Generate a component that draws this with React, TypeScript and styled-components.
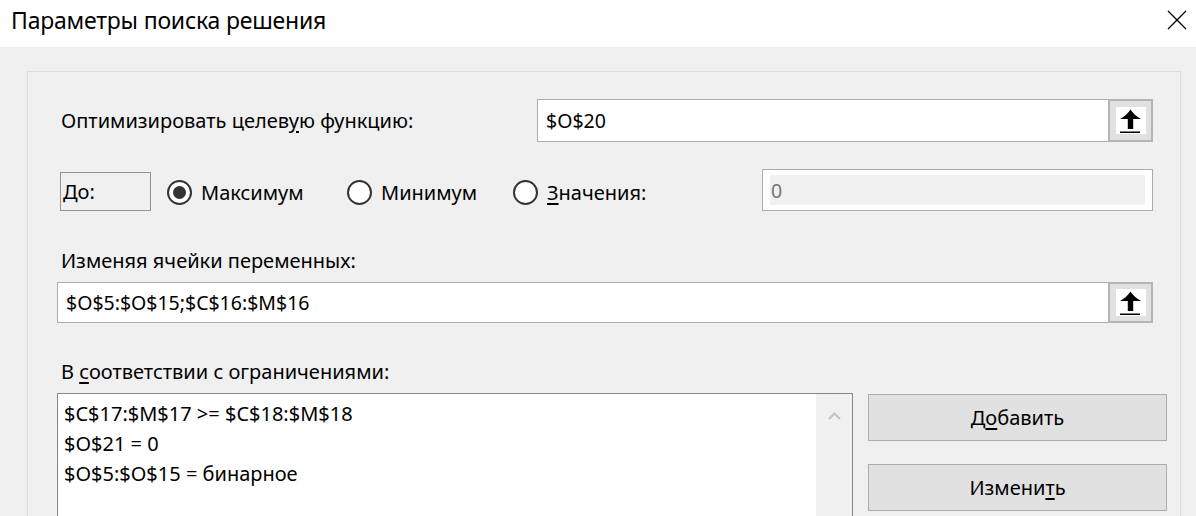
import React from 'react';
import styled, { createGlobalStyle } from 'styled-components';

const GlobalStyle = createGlobalStyle`
  html, body {
    margin: 0;
    padding: 0;
    background: #f0f0f0;
  }
  body {
    font-family: "Noto Sans", "Open Sans", sans-serif;
    color: #000;
    overflow: hidden;
  }
`;

const Window = styled.div`
  width: 1196px;
  height: 516px;
  overflow: hidden;
  display: flex;
  flex-direction: column;
  background: #f0f0f0;
`;

const TitleBar = styled.div`
  flex: none;
  height: 47px;
  background: #ffffff;
  display: flex;
  align-items: center;
  justify-content: space-between;
  padding: 0 8px 8px 11px;
  box-sizing: border-box;
`;

const Title = styled.div`
  font-size: 23px;
  letter-spacing: -0.2px;
`;

const CloseButton = styled.div`
  width: 22px;
  height: 22px;
  display: flex;
  align-items: center;
  justify-content: center;
`;

const Body = styled.div`
  flex: 1;
  min-height: 0;
  display: flex;
  padding: 24px 15px 0 27px;
`;

const Panel = styled.div`
  flex: 1;
  border: 1px solid #dcdcdc;
  border-bottom: none;
  padding: 27px 27px 0 29px;
  display: flex;
  flex-direction: column;
`;

const Row = styled.div<{ $height: number; $top?: number }>`
  display: flex;
  align-items: center;
  height: ${(p) => p.$height}px;
  margin-top: ${(p) => p.$top ?? 0}px;
  flex: none;
`;

const Label = styled.div<{ $top?: number }>`
  font-size: 20px;
  line-height: 28px;
  padding-left: 4px;
  margin-top: ${(p) => p.$top ?? 0}px;
  flex: none;
`;

const RowLabel = styled(Label)`
  flex: 1;
`;

const Mn = styled.span`
  text-decoration: underline;
  text-decoration-thickness: 2px;
  text-underline-offset: 3px;
`;

const RefGroup = styled.div<{ $width?: number; $height: number }>`
  display: flex;
  flex: none;
  height: ${(p) => p.$height}px;
  width: ${(p) => (p.$width ? `${p.$width}px` : 'auto')};
  margin-top: ${(p) => (p.$width ? 0 : 7)}px;
`;

const RefField = styled.div`
  flex: 1;
  background: #ffffff;
  border: 1px solid #adadad;
  border-right: none;
  display: flex;
  align-items: center;
  padding-left: 8px;
  font-size: 19.5px;
`;

const RefButton = styled.div`
  width: 45px;
  flex: none;
  box-sizing: border-box;
  border: 2px solid #b4b4b4;
  background: #e1e1e1;
  display: flex;
  align-items: center;
  justify-content: center;
`;

const RefIcon = styled.div`
  width: 30px;
  height: 27px;
  background: #ffffff;
  display: flex;
`;

const DoBox = styled.div`
  width: 91px;
  height: 39px;
  box-sizing: border-box;
  margin-left: 3px;
  align-self: flex-end;
  border: 1px solid #8d949e;
  font-size: 20px;
  padding: 5px 0 0 2px;
`;

const RadioOption = styled.div<{ $width?: number; $left?: number }>`
  display: flex;
  align-items: center;
  gap: 9px;
  width: ${(p) => (p.$width ? `${p.$width}px` : 'auto')};
  margin-left: ${(p) => p.$left ?? 0}px;
  flex: none;
  font-size: 20px;
  padding-top: 4px;
`;

const RadioCircle = styled.div<{ $checked?: boolean }>`
  width: 25px;
  height: 25px;
  box-sizing: border-box;
  border: 2px solid #333333;
  border-radius: 50%;
  background: #ffffff;
  display: flex;
  align-items: center;
  justify-content: center;
  &::after {
    content: '';
    display: ${(p) => (p.$checked ? 'block' : 'none')};
    width: 13px;
    height: 13px;
    border-radius: 50%;
    background: #333333;
  }
`;

const ValueBox = styled.div`
  flex: 1;
  height: 42px;
  box-sizing: border-box;
  border: 1px solid #adadad;
  background: #ffffff;
  padding: 5px 7px;
  display: flex;
`;

const ValueInner = styled.div`
  flex: 1;
  background: #f0f0f0;
  color: #767676;
  font-size: 19.5px;
  display: flex;
  align-items: center;
  padding-left: 1px;
`;

const ConstraintRow = styled.div`
  display: flex;
  margin-top: 7px;
  flex: none;
`;

const ListBox = styled.div`
  width: 796px;
  height: 150px;
  box-sizing: border-box;
  border: 1px solid #828790;
  border-bottom: none;
  display: flex;
  flex: none;
`;

const ListItems = styled.div`
  flex: 1;
  background: #ffffff;
  padding: 5px 6px;
  font-size: 20px;
  line-height: 30px;
`;

const ScrollTrack = styled.div`
  width: 36px;
  background: #f0f0f0;
  display: flex;
  justify-content: center;
  padding-top: 18px;
  box-sizing: border-box;
`;

const ButtonColumn = styled.div`
  display: flex;
  flex-direction: column;
  gap: 23px;
  margin-left: 15px;
  margin-right: -14px;
  margin-top: 1px;
  flex: 1;
`;

const DialogButton = styled.div`
  height: 47px;
  box-sizing: border-box;
  border: 1px solid #adadad;
  background: #e1e1e1;
  display: flex;
  align-items: center;
  justify-content: center;
  font-size: 20px;
`;

function ArrowIcon() {
  return (
    <svg width="30" height="27" viewBox="0 0 30 27">
      <path
        d="M14.5 2.5 Q18 8 25 12 L17.2 12 L17.2 22 L11.8 22 L11.8 12 L4 12 Q11 8 14.5 2.5 Z"
        fill="#000"
      />
      <rect x="4" y="24.5" width="20" height="1.5" fill="#000" />
    </svg>
  );
}

function RefInput({ value, width, height }: { value: string; width?: number; height: number }) {
  return (
    <RefGroup $width={width} $height={height}>
      <RefField>{value}</RefField>
      <RefButton>
        <RefIcon>
          <ArrowIcon />
        </RefIcon>
      </RefButton>
    </RefGroup>
  );
}

export default function App() {
  const constraints = [
    '$C$17:$M$17 >= $C$18:$M$18',
    '$O$21 = 0',
    '$O$5:$O$15 = бинарное',
  ];

  return (
    <Window>
      <GlobalStyle />
      <TitleBar>
        <Title>Параметры поиска решения</Title>
        <CloseButton>
          <svg width="20" height="20" viewBox="0 0 20 20">
            <path d="M1 1 L19 19 M19 1 L1 19" stroke="#000" strokeWidth="1.3" />
          </svg>
        </CloseButton>
      </TitleBar>
      <Body>
        <Panel>
          <Row $height={43}>
            <RowLabel>
              Оптимизировать целев<Mn>у</Mn>ю функцию:
            </RowLabel>
            <RefInput value="$O$20" width={616} height={43} />
          </Row>

          <Row $height={42} $top={27}>
            <DoBox>До:</DoBox>
            <RadioOption $left={16} $width={180}>
              <RadioCircle $checked />
              Максимум
            </RadioOption>
            <RadioOption $width={166}>
              <RadioCircle />
              Минимум
            </RadioOption>
            <RadioOption $width={249}>
              <RadioCircle />
              <span>
                <Mn>З</Mn>начения:
              </span>
            </RadioOption>
            <ValueBox>
              <ValueInner>0</ValueInner>
            </ValueBox>
          </Row>

          <Label $top={36}>Изменяя ячейки переменных:</Label>
          <RefInput value="$O$5:$O$15;$C$16:$M$16" height={41} />

          <Label $top={35}>
            В <Mn>с</Mn>оответствии с ограничениями:
          </Label>
          <ConstraintRow>
            <ListBox>
              <ListItems>
                {constraints.map((c) => (
                  <div key={c}>{c}</div>
                ))}
              </ListItems>
              <ScrollTrack>
                <svg width="13" height="8" viewBox="0 0 13 8">
                  <path d="M1 7 L6.5 1.5 L12 7" fill="none" stroke="#c2c2c2" strokeWidth="2" />
                </svg>
              </ScrollTrack>
            </ListBox>
            <ButtonColumn>
              <DialogButton>
                Д<Mn>о</Mn>бавить
              </DialogButton>
              <DialogButton>
                Измени<Mn>т</Mn>ь
              </DialogButton>
            </ButtonColumn>
          </ConstraintRow>
        </Panel>
      </Body>
    </Window>
  );
}
